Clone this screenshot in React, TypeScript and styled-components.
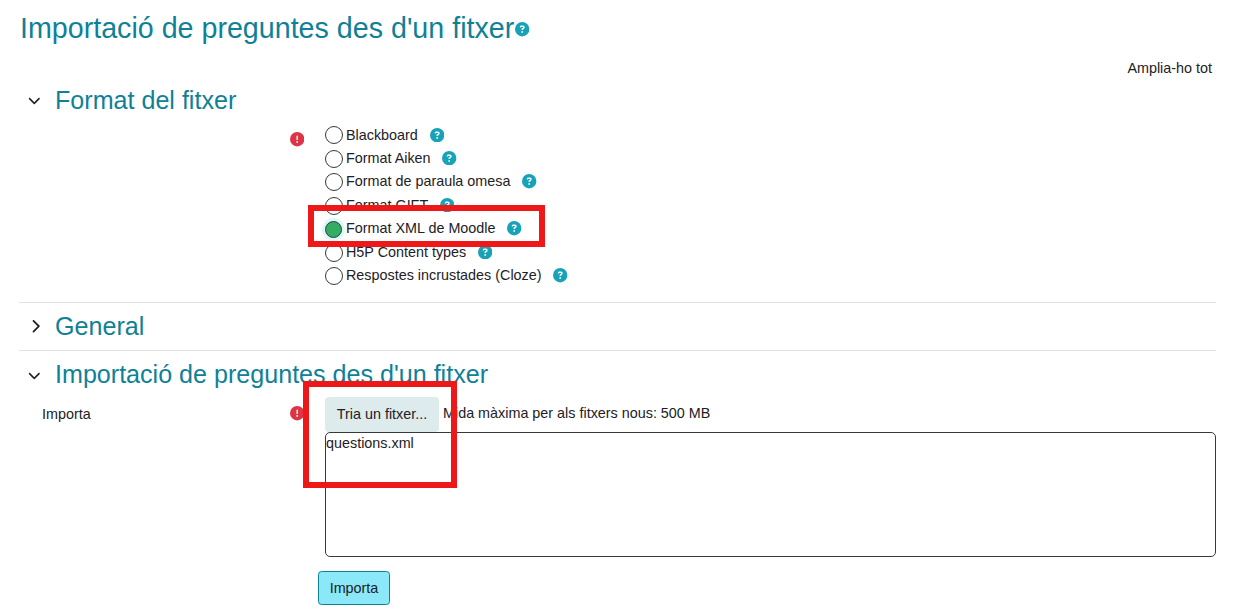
import React from 'react';
import styled, { createGlobalStyle } from 'styled-components';
import { FaCircleQuestion, FaCircleExclamation, FaChevronDown, FaChevronRight } from 'react-icons/fa6';

const GlobalStyle = createGlobalStyle`
  *, *::before, *::after { box-sizing: border-box; }
  body {
    margin: 0;
    background: #fff;
    color: #1d2125;
    font: 14.37px/21.6px "Liberation Sans", Arial, sans-serif;
  }
`;

const Page = styled.main`
  position: relative;
  width: 1233px;
  height: 612px;
  overflow: hidden;
  padding: 11px 17px 0 19px;
`;

const Title = styled.h2`
  display: flex;
  align-items: center;
  height: 35px;
  margin: 0;
  padding-left: 1px;
  color: #0f8197;
  font-size: 28.65px;
  line-height: 35px;
  font-weight: 400;
  svg { margin: 2px 0 0 1px; }
`;

const HelpIcon = styled(FaCircleQuestion)`
  width: 14.4px;
  height: 14.4px;
  flex: none;
  color: #18a2b8;
`;

const RequiredIcon = styled(FaCircleExclamation)`
  width: 14.4px;
  height: 14.4px;
  color: #dc3545;
`;

const ExpandAll = styled.div`
  height: 20px;
  margin-top: 12px;
  padding-right: 4px;
  text-align: right;
`;

const Section = styled.section<{ $height: number; $divided?: boolean }>`
  height: ${(p) => p.$height}px;
  border-bottom: ${(p) => (p.$divided ? '1px solid #dee2e6' : 'none')};
`;

const SectionHeader = styled.div<{ $height: number }>`
  display: flex;
  align-items: center;
  height: ${(p) => p.$height}px;
`;

const Toggle = styled.span<{ $open?: boolean }>`
  display: flex;
  justify-content: center;
  width: ${(p) => (p.$open ? 31 : 33)}px;
  margin-right: ${(p) => (p.$open ? 5 : 3)}px;
  padding-top: ${(p) => (p.$open ? 2 : 0)}px;
  svg { width: 12.6px; height: 14.4px; }
`;

const SectionTitle = styled.h3`
  margin: 0;
  color: #0f8197;
  font-size: 25.1px;
  line-height: 30px;
  font-weight: 400;
`;

const FieldRow = styled.div`
  display: grid;
  grid-template-columns: 271px 35px 1fr;
`;

const FieldLabel = styled.div`
  padding: 7px 0 0 23px;
`;

const RequiredCell = styled.div<{ $top: number }>`
  padding-top: ${(p) => p.$top}px;
  line-height: 0;
`;

const RadioList = styled.div`
  display: flex;
  flex-direction: column;
  padding-top: 2.6px;
`;

const RadioRow = styled.label`
  display: flex;
  align-items: center;
  height: 23.45px;
  svg { margin-top: -1px; }
`;

const Radio = styled.input`
  appearance: none;
  flex: none;
  width: 18px;
  height: 18px;
  margin: 0 3px 0 0;
  border: 1px solid #343a40;
  border-radius: 50%;
  background: #fff;
  &:checked {
    width: 17px;
    height: 17px;
    margin-right: 4px;
    background: #35ac63;
    border-color: #23463f;
    box-shadow: 0 0 0 3px #def7fb;
  }
`;

const RadioText = styled.span`
  margin-right: 11.7px;
`;

const PickerBar = styled.div`
  display: flex;
  height: 35px;
`;

const ChooseButton = styled.button`
  width: 114px;
  height: 35px;
  margin-right: 4px;
  padding: 0;
  border: 0;
  border-radius: 4px;
  background: #deebec;
  color: inherit;
  font: inherit;
`;

const SizeNote = styled.span`
  padding-top: 6px;
`;

const DropArea = styled.div`
  height: 125px;
  border: 1px solid #343a40;
  border-radius: 5px;
`;

const SubmitButton = styled.button`
  display: block;
  width: 72px;
  height: 34px;
  margin: 14px 0 0 299px;
  padding: 1px 0 0;
  border: 1px solid #0f8197;
  border-radius: 3.5px;
  background: #8ae8f8;
  color: inherit;
  font: inherit;
`;

const Highlight = styled.div<{ $x: number; $y: number; $w: number; $h: number }>`
  position: absolute;
  left: ${(p) => p.$x}px;
  top: ${(p) => p.$y}px;
  width: ${(p) => p.$w}px;
  height: ${(p) => p.$h}px;
  border: 6px solid #ee1818;
  pointer-events: none;
`;

const formats = [
  'Blackboard',
  'Format Aiken',
  'Format de paraula omesa',
  'Format GIFT',
  'Format XML de Moodle',
  'H5P Content types',
  'Respostes incrustades (Cloze)',
];

function Header({ title, open, height = 46 }: { title: string; open?: boolean; height?: number }) {
  return (
    <SectionHeader $height={height}>
      <Toggle $open={open}>{open ? <FaChevronDown /> : <FaChevronRight />}</Toggle>
      <SectionTitle>{title}</SectionTitle>
    </SectionHeader>
  );
}

export default function App() {
  return (
    <>
      <GlobalStyle />
      <Page>
        <Title>Importació de preguntes des d'un fitxer<HelpIcon /></Title>
        <ExpandAll>Amplia-ho tot</ExpandAll>
        <Section $height={225} $divided>
          <Header title="Format del fitxer" open height={43} />
          <FieldRow>
            <FieldLabel />
            <RequiredCell $top={11.4}><RequiredIcon /></RequiredCell>
            <RadioList>
              {formats.map((name) => (
                <RadioRow key={name}>
                  <Radio type="radio" name="format" defaultChecked={name === 'Format XML de Moodle'} />
                  <RadioText>{name}</RadioText>
                  <HelpIcon />
                </RadioRow>
              ))}
            </RadioList>
          </FieldRow>
        </Section>
        <Section $height={48} $divided>
          <Header title="General" />
        </Section>
        <Section $height={206}>
          <Header title="Importació de preguntes des d'un fitxer" open />
          <FieldRow>
            <FieldLabel>Importa</FieldLabel>
            <RequiredCell $top={9.3}><RequiredIcon /></RequiredCell>
            <div>
              <PickerBar>
                <ChooseButton type="button">Tria un fitxer...</ChooseButton>
                <SizeNote>Mida màxima per als fitxers nous: 500 MB</SizeNote>
              </PickerBar>
              <DropArea>questions.xml</DropArea>
            </div>
          </FieldRow>
        </Section>
        <SubmitButton type="button">Importa</SubmitButton>
        <Highlight $x={308} $y={205} $w={237} $h={42} />
        <Highlight $x={303} $y={381} $w={154} $h={107} />
      </Page>
    </>
  );
}
